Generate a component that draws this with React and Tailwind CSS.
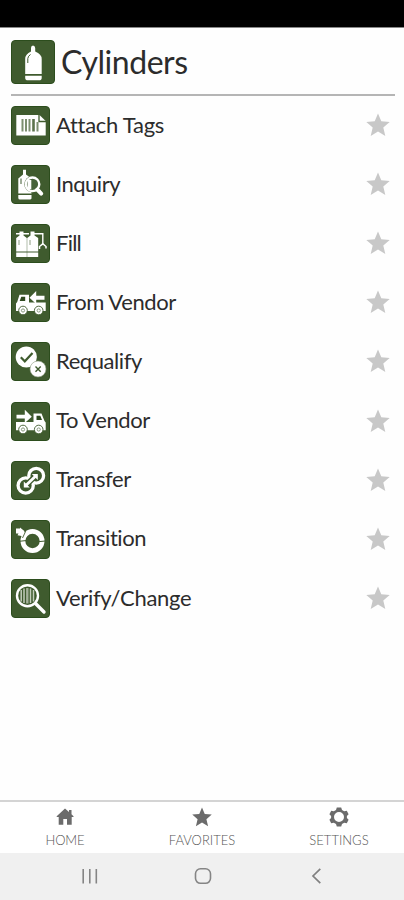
import React from 'react';

const Tile = ({ children }) => (
  <svg viewBox="0 0 39 39" className="w-[39px] h-[39px] shrink-0" fill="none">
    <rect x="0.5" y="0.5" width="38" height="38" rx="3.5" fill="#3f5b2e" stroke="#2c4d1d" />
    {children}
  </svg>
);

const TagIcon = () => (
  <Tile>
    <path d="M5.3 9H28.5L34.7 15V29.5H5.3Z" fill="#fff" />
    <path d="M28 8.5V15.5H35" stroke="#3f5b2e" strokeWidth="1.3" />
    <path d="M11.5 13V25.5M15 13V25.5M18.5 13V25.5M26.5 16V25.5" stroke="#7d8f70" strokeWidth="2" />
    <path d="M22.5 13V25.5" stroke="#5c734c" strokeWidth="2.6" />
  </Tile>
);

const InquiryIcon = () => (
  <Tile>
    <path d="M12 4.8H15V9.5L20.5 13.5V28.5H7.3V13.5L12 9.5ZM7.3 30H20.5V33.5Q20 34.5 19 34.5H9Q7.3 34.5 7.3 33Z" fill="#fff" />
    <path d="M10 13.5V19" stroke="#3f5b2e" />
    <circle cx="21.5" cy="19.3" r="8.2" fill="#3f5b2e" />
    <circle cx="21.5" cy="19.3" r="6.8" fill="#46623a" stroke="#fff" strokeWidth="2.4" />
    <path d="M16.5 15H20.3V24H16.5Z" fill="#fff" />
    <path d="M26.3 24.5L30.2 28.6" stroke="#fff" strokeWidth="4" strokeLinecap="round" />
  </Tile>
);

const FillIcon = () => (
  <Tile>
    <path d="M8.5 7.5H12.5V11.5L15.8 14V27.5H5.2V14L8.5 11.5ZM5.2 28.6H15.8V33H5.2Z" fill="#fff" />
    <path d="M19.5 7.5H23.5V11.5L27.2 14V27.5H16.2V14L19.5 11.5ZM16.2 28.6H27.2V33H16.2Z" fill="#fff" />
    <path d="M5 9.8H18M23 9.8H31.8V20" stroke="#fff" strokeWidth="1.4" />
    <path d="M28.5 25V22.5L31.8 19.8L35 22.5V24.5" stroke="#fff" strokeWidth="1.5" />
    <path d="M8 16V21M19 16V21" stroke="#708463" strokeWidth="0.8" />
  </Tile>
);

const Wheels = () => (
  <>
    <circle cx="12" cy="27.5" r="4.3" fill="#fff" stroke="#3f5b2e" strokeWidth="0.9" />
    <circle cx="12" cy="27.5" r="1.6" stroke="#8a9b80" strokeWidth="1" />
    <circle cx="27.7" cy="27.5" r="4.3" fill="#fff" stroke="#3f5b2e" strokeWidth="0.9" />
    <circle cx="27.7" cy="27.5" r="1.6" stroke="#8a9b80" strokeWidth="1" />
  </>
);

const FromVendorIcon = () => (
  <Tile>
    <path d="M8.5 11.7H18V19.5H34.7V28H5V20.5L6.2 19Z" fill="#fff" />
    <path d="M10.3 13.7H14.2V18H8.7Z" fill="#2f4a20" />
    <path d="M18.5 14.7L25.2 8V12.7H33.5V16.8H25.2V21Z" fill="#fff" />
    <Wheels />
  </Tile>
);

const ToVendorIcon = () => (
  <Tile>
    <path d="M30.5 11.5H22.5V20H5V28.3H34.7V20.5L33.5 19Z" fill="#fff" />
    <path d="M25.5 13.7H29.3L31 18H25.5Z" fill="#2f4a20" />
    <path d="M20.8 14.7L13.8 7.8V12.7H5.5V16.5H13.8V21Z" fill="#fff" />
    <Wheels />
  </Tile>
);

const RequalifyIcon = () => (
  <Tile>
    <circle cx="15.3" cy="15" r="10.6" fill="#fff" />
    <path d="M9.8 15.3L13.8 19.3L21.5 11" stroke="#3f5b2e" strokeWidth="2.2" />
    <circle cx="27" cy="27" r="8" fill="#fff" stroke="#8b9b80" strokeWidth="0.6" />
    <path d="M24.5 24.5L29.7 29.7M29.7 24.5L24.5 29.7" stroke="#3f5b2e" strokeWidth="1.4" />
  </Tile>
);

const TransferIcon = () => (
  <Tile>
    <circle cx="14.7" cy="24.5" r="7.6" stroke="#fff" strokeWidth="3.3" />
    <circle cx="25.2" cy="14.7" r="7.4" stroke="#fff" strokeWidth="3.3" />
    <path d="M16.5 22.8L23.5 16" stroke="#3f5b2e" strokeWidth="5.5" />
    <path d="M14 25.3L25.5 14.2" stroke="#fff" strokeWidth="2.8" />
    <path d="M20.8 13H26.8V19ZM12.8 20.5V26.5H18.8Z" fill="#fff" />
  </Tile>
);

const TransitionIcon = () => (
  <Tile>
    <circle cx="21.5" cy="21" r="9.6" stroke="#fff" strokeWidth="4.8" />
    <path d="M9 21.2L15 20.6M28 21.6L34.3 21" stroke="#3f5b2e" strokeWidth="1" />
    <path d="M5 8.5H9V7.5L13.3 11V16.5L6.5 15.3L7.5 13.5H5Z" fill="#fff" />
    <path d="M11.5 18L14.8 11" stroke="#3f5b2e" strokeWidth="0.9" />
  </Tile>
);

const VerifyIcon = () => (
  <Tile>
    <path d="M25 25L33 33" stroke="#fff" strokeWidth="3.4" strokeLinecap="round" />
    <circle cx="16.5" cy="16.7" r="10.5" fill="#3f5b2e" stroke="#fff" strokeWidth="2.4" />
    <path d="M10.2 11V22.5M13 9.5V24M19.5 9.5V24M22.5 11V22.5" stroke="#c4cdbc" strokeWidth="1.5" />
    <path d="M16.3 9V24.5" stroke="#a5b29b" strokeWidth="2.4" />
  </Tile>
);

const Star = ({ className }) => (
  <svg viewBox="0 0 24 24" className={className} fill="currentColor">
    <path d="M12 0.5L15.3 8.3L23.7 9L17.3 14.6L19.3 23L12 18.6L4.7 23L6.7 14.6L0.3 9L8.7 8.3Z" />
  </svg>
);

const items = [
  { label: 'Attach Tags', icon: TagIcon, tracking: 'tracking-[-0.27px]' },
  { label: 'Inquiry', icon: InquiryIcon, tracking: 'tracking-[-0.5px]' },
  { label: 'Fill', icon: FillIcon, tracking: 'tracking-[-0.75px]' },
  { label: 'From Vendor', icon: FromVendorIcon, tracking: 'tracking-[-0.42px]' },
  { label: 'Requalify', icon: RequalifyIcon, tracking: 'tracking-[-0.42px]' },
  { label: 'To Vendor', icon: ToVendorIcon, tracking: 'tracking-[-0.42px]' },
  { label: 'Transfer', icon: TransferIcon, tracking: 'tracking-[-0.42px]' },
  { label: 'Transition', icon: TransitionIcon, tracking: 'tracking-[-0.42px]' },
  { label: 'Verify/Change', icon: VerifyIcon, tracking: 'tracking-[-0.3px]' },
];

const App = () => {
  return (
    <div className="flex flex-col w-[404px] h-[900px] bg-[#fefefe] font-['Lato',sans-serif] text-[#2c2c2c] overflow-hidden">
      {/* Status bar */}
      <div className="h-7 shrink-0 bg-black border-b border-[#888]" />

      {/* Title */}
      <header className="flex items-center h-[68px] shrink-0 ml-[11px] mr-[9px] pt-0.5 border-b-2 border-[#b5b5b5]">
        <svg viewBox="0 0 44 44" className="w-11 h-11 shrink-0" fill="none">
          <rect x="0.5" y="0.5" width="43" height="43" rx="3.5" fill="#3f5b2e" stroke="#2c4d1d" />
          <path d="M20 8Q20 5.5 22 5.5T24.2 8V11.5Q30.7 14 30.7 19V34H14.2V19Q14.2 14 20 11.5ZM14.2 35.8H30.7V38Q30.7 40.3 28 40.3H17Q14.2 40.3 14.2 38Z" fill="#fff" />
          <path d="M16.8 23V18.5Q17 16 19.5 14.5" stroke="#3f5b2e" strokeWidth="1" />
        </svg>
        <h1 className="ml-1.5 text-[32px] leading-none tracking-[-0.45px]">Cylinders</h1>
      </header>

      {/* Menu */}
      <ul className="flex flex-col pl-[11px] pr-[14.5px]">
        {items.map(({ label, icon: Icon, tracking }) => (
          <li key={label} className="flex items-center h-[59.1px]">
            <Icon />
            <span className={`ml-1.5 pb-[1.5px] text-[22px] leading-none whitespace-nowrap ${tracking}`}>{label}</span>
            <Star className="ml-auto mb-px w-6 h-6 text-[#c8c8c8]" />
          </li>
        ))}
      </ul>

      {/* Tab bar */}
      <nav className="flex justify-center mt-auto h-[53px] shrink-0 border-t-2 border-[#d4d4d4] bg-white text-[#6b6b6b]">
        <div className="flex flex-col items-center shrink-0 w-[137px] pt-[5px]">
          <svg viewBox="0 0 20 20" className="w-5 h-5" fill="currentColor">
            <path d="M10 1.5L14 5V3H16.5V7.3L18.5 9.2V10H16.7V17.8H12V12H8.3V17.8H3.7V10H1.7V9.2Z" />
          </svg>
          <span className="mt-[5px] text-[13px] leading-4 font-light tracking-[-0.1px] text-[#555]">HOME</span>
        </div>
        <div className="flex flex-col items-center shrink-0 w-[137px] pt-[5px]">
          <Star className="w-5 h-5" />
          <span className="mt-[5px] text-[13px] leading-4 font-light text-[#555]">FAVORITES</span>
        </div>
        <div className="flex flex-col items-center shrink-0 w-[137px] pt-[5px]">
          <svg viewBox="0 0 20 20" className="w-5 h-5" fill="currentColor" fillRule="evenodd">
            <path d="M7.8 0.5H12.2L13 3L15.2 4.2L17.8 3.7L19.6 7.2L17.9 9V11L19.6 12.8L17.8 16.3L15.2 15.8L13 17L12.2 19.5H7.8L7 17L4.8 15.8L2.2 16.3L0.4 12.8L2.1 11V9L0.4 7.2L2.2 3.7L4.8 4.2L7 3ZM10 5A5 5 0 1 0 10 15A5 5 0 1 0 10 5Z" />
          </svg>
          <span className="mt-[5px] text-[13px] leading-4 font-light text-[#555]">SETTINGS</span>
        </div>
      </nav>

      {/* System navigation */}
      <div className="flex items-center h-[47px] shrink-0 bg-[#f0f0f0] pl-[81px] pb-0.5">
        <svg viewBox="0 0 18 18" className="w-[18px] h-[18px]" fill="none" stroke="#858585" strokeWidth="1.6">
          <path d="M2.2 2V16.5M8.8 2V16.5M15.3 2V16.5" />
        </svg>
        <svg viewBox="0 0 18 18" className="ml-[95px] w-[18px] h-[18px]" fill="none" stroke="#858585" strokeWidth="1.6">
          <rect x="1.5" y="1.8" width="15" height="14.5" rx="5" />
        </svg>
        <svg viewBox="0 0 18 18" className="ml-[96px] w-[18px] h-[18px]" fill="none" stroke="#808080" strokeWidth="1.7">
          <path d="M12.3 1.8L5 9L12.3 16.2" />
        </svg>
      </div>
    </div>
  );
};

export default App;
